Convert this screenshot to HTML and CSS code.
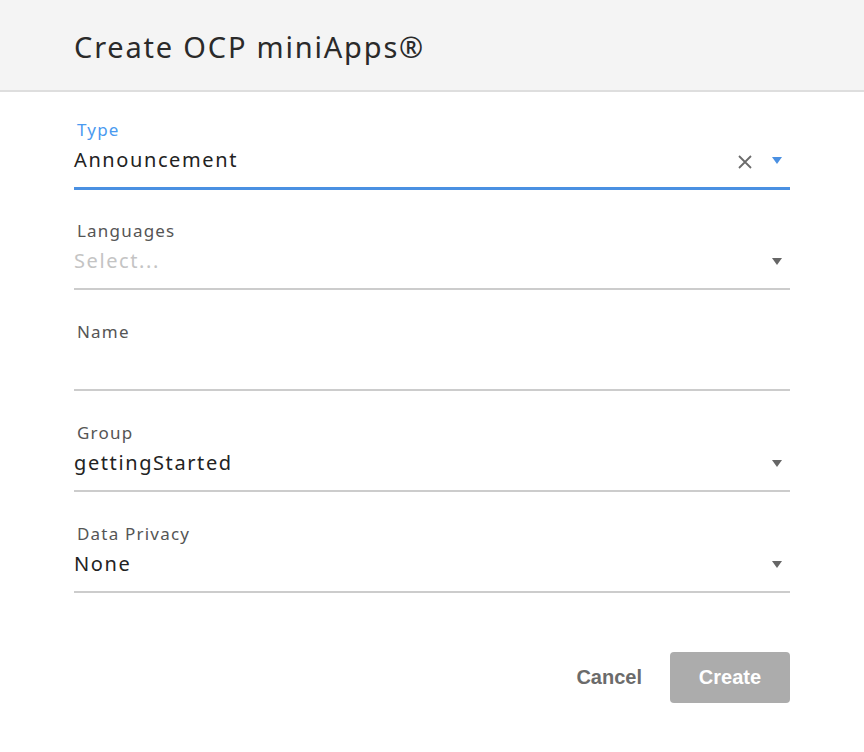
FILE: index.html
```html
<!DOCTYPE html>
<html>
<head>
<meta charset="utf-8">
<link rel="stylesheet" href="styles.css">
</head>
<body>
<div class="dialog">
  <header class="header"><h1 class="title">Create OCP miniApps®</h1></header>
  <form class="form">
    <div class="field focused">
      <label class="label">Type</label>
      <div class="row">
        <span class="value">Announcement</span>
        <span class="icons">
          <svg class="clear" width="16" height="16" viewBox="0 0 16 16"><path d="M2 2L14 14M14 2L2 14" stroke="#6b6b6b" stroke-width="1.8" fill="none"/></svg>
          <svg class="arrow" width="10" height="7" viewBox="0 0 10 7"><path d="M0 0H10L5 7Z" fill="#4a90e2"/></svg>
        </span>
      </div>
    </div>
    <div class="field">
      <label class="label">Languages</label>
      <div class="row">
        <span class="value placeholder">Select...</span>
        <span class="icons"><svg class="arrow" width="10" height="7" viewBox="0 0 10 7"><path d="M0 0H10L5 7Z" fill="#666"/></svg></span>
      </div>
    </div>
    <div class="field">
      <label class="label">Name</label>
      <div class="row"><span class="value"></span></div>
    </div>
    <div class="field">
      <label class="label">Group</label>
      <div class="row">
        <span class="value">gettingStarted</span>
        <span class="icons"><svg class="arrow" width="10" height="7" viewBox="0 0 10 7"><path d="M0 0H10L5 7Z" fill="#666"/></svg></span>
      </div>
    </div>
    <div class="field">
      <label class="label">Data Privacy</label>
      <div class="row">
        <span class="value">None</span>
        <span class="icons"><svg class="arrow" width="10" height="7" viewBox="0 0 10 7"><path d="M0 0H10L5 7Z" fill="#666"/></svg></span>
      </div>
    </div>
    <div class="actions">
      <button type="button" class="btn-cancel">Cancel</button>
      <button type="button" class="btn-create">Create</button>
    </div>
  </form>
</div>
</body>
</html>
```
FILE: styles.css
```css
* { box-sizing: border-box; }
html, body { margin: 0; padding: 0; background: #fff; }
body { font-family: "Noto Sans", "DejaVu Sans", sans-serif; color: #222; }
.header {
  height: 92px;
  background: #f4f4f4;
  border-bottom: 2px solid #dedede;
  display: flex;
  align-items: center;
  padding-left: 74px;
}
.title {
  margin: 0;
  font-size: 29px;
  font-weight: 400;
  letter-spacing: 1.8px;
  color: #2a2a2a;
  padding-top: 2px;
}
.form {
  padding: 28px 74px 0 74px;
  display: flex;
  flex-direction: column;
  gap: 32px;
}
.field {
  border-bottom: 2px solid #cccccc;
}
.field.focused { border-bottom: 3px solid #4a90e2; margin-bottom: -1px; }
.label {
  display: block;
  height: 20px;
  line-height: 20px;
  font-size: 17px;
  letter-spacing: 1.2px;
  color: #555;
  padding-left: 3px;
}
.focused .label { color: #4a9af0; }
.row {
  display: flex;
  align-items: flex-start;
  padding-top: 5px;
  padding-bottom: 12px;
  height: 47px;
}
.value {
  flex: 1;
  line-height: 30px;
  font-size: 20px;
  letter-spacing: 1.6px;
  color: #222;
}
.placeholder { color: #c4c4c4; }
.icons {
  display: flex;
  align-items: center;
  height: 30px;
  padding-right: 8px;
  gap: 19px;
}
.icons .arrow { position: relative; top: 0; }
.focused .icons .arrow { top: 0; }
.clear { margin-top: 4px; }
.actions {
  display: flex;
  justify-content: flex-end;
  align-items: center;
  margin-top: 27px;
}
.btn-cancel {
  background: none;
  border: none;
  padding: 0;
  font-family: "Liberation Sans", Arial, sans-serif;
  font-weight: 700;
  font-size: 20px;
  color: #6b6b6b;
  margin-right: 28px;
}
.btn-create {
  width: 120px;
  height: 51px;
  background: #acacac;
  border: none;
  border-radius: 4px;
  font-family: "Liberation Sans", Arial, sans-serif;
  font-weight: 700;
  font-size: 20px;
  color: #fff;
}
```
